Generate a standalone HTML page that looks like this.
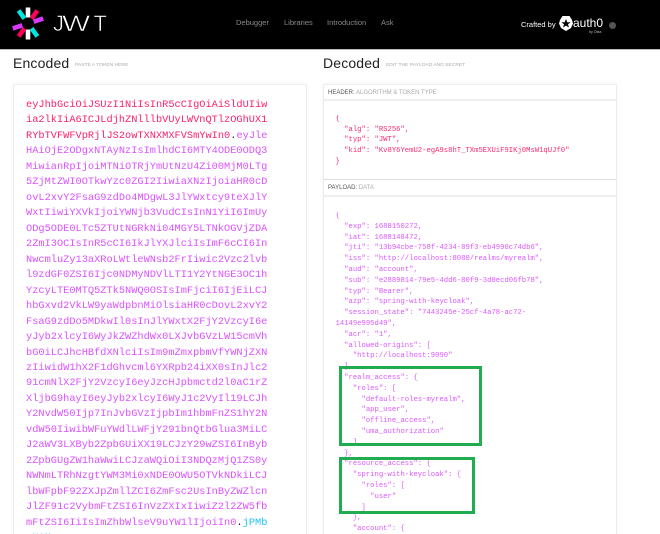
<!DOCTYPE html>
<html style="height:534px;overflow:hidden"><head><meta charset="utf-8"><title>JWT</title>
<style>
html,body{margin:0;padding:0;background:#fff}
body{width:660px;height:534px;overflow:hidden}
#wrap{position:relative;width:660px;height:534px;overflow:hidden;font-family:"Liberation Sans",sans-serif;filter:blur(.35px)}
.a{position:absolute;white-space:pre}
#top{position:absolute;left:0;top:0;width:660px;height:49px;background:#000;border-bottom:1px solid #bbb}
.nav{color:#8a8a8a;font-size:7.5px;top:18px;line-height:10px}
.panel{position:absolute;background:#fff;border:1px solid #ececec;border-radius:2px;box-shadow:0 0 3px rgba(0,0,0,.06);box-sizing:border-box}
.h{font-size:14px;color:#222;letter-spacing:.15px;top:55px;line-height:16px}
.sub{font-size:4.95px;color:#aaa;line-height:6px;top:63px}
.lbl{font-size:6px;line-height:8px;color:#aaa}
.lbl b{font-weight:400;color:#555}
.logo{color:#fff;font-size:22px;line-height:25px;-webkit-text-stroke:.55px #000;transform-origin:0 0}
#tok{position:absolute;left:26px;top:98px;font:10.32px/15.47px "Liberation Mono",monospace;color:#d63aff;white-space:pre;opacity:.88}
.r{color:#fb015b}.k{color:#000}.b{color:#00b9f1}
.json{position:absolute;left:335.5px;font:7.22px/10.79px "Liberation Mono",monospace;white-space:pre;opacity:.85}
.box{position:absolute;border:3px solid #22ac50;box-sizing:border-box}
</style></head><body>
<div id="wrap">
<div id="top"></div>
<svg class="a" style="left:10px;top:6px" width="36" height="36" viewBox="-18 -18 36 36">
<g stroke-width="4.6" fill="none" transform="translate(0,-.5)">
<path stroke="#fff" d="M0-16V-6M0 16V6"/>
<path stroke="#fb015b" d="M0-16V-6M0 16V6" transform="rotate(36)"/>
<path stroke="#d63aff" d="M0-16V-6M0 16V6" transform="rotate(72)"/>
<path stroke="#00e5e0" d="M0-16V-6M0 16V6" transform="rotate(-36)"/>
</g></svg>
<div class="a logo" style="left:53px;top:11px">J</div>
<div class="a logo" style="left:62px;top:11px;transform:scaleX(1.35)">W</div>
<div class="a logo" style="left:93.5px;top:11px">T</div>
<div class="a nav" style="left:236px">Debugger</div>
<div class="a nav" style="left:284px">Libraries</div>
<div class="a nav" style="left:327px">Introduction</div>
<div class="a nav" style="left:381px">Ask</div>
<div class="a" style="left:521px;top:20px;color:#fff;font-size:7.5px;line-height:10px">Crafted by</div>
<svg class="a" style="left:559px;top:16px" width="14" height="15" viewBox="0 0 14 15">
<path fill="#fff" d="M3.5 0H10.5L13 4 14 7.5 12 12 7 15 2 12 0 7.5 1 4Z"/>
<path fill="#000" d="M7 3L8.3 6.2H11.6L9 8.3 10 11.5 7 9.6 4 11.5 5 8.3 2.4 6.2H5.7Z"/>
</svg>
<div class="a" style="left:573px;top:16px;color:#fff;font-size:12px;line-height:15px">auth0</div>
<div class="a" style="left:589px;top:30px;color:#bbb;font-size:3.6px;line-height:5px">by Okta</div>
<div class="a" style="left:608.5px;top:22px;width:7px;height:7px;border-radius:50%;background:#555"></div>

<div class="a h" style="left:13px">Encoded</div>
<div class="a sub" style="left:75px">PASTE A TOKEN HERE</div>
<div class="a h" style="left:323px">Decoded</div>
<div class="a sub" style="left:386px">EDIT THE PAYLOAD AND SECRET</div>

<div class="panel" style="left:13px;top:84px;width:294px;height:470px"></div>
<div class="panel" style="left:323px;top:84px;width:294px;height:470px"></div>
<div class="a" style="left:324px;top:99px;width:292px;height:2px;background:#eee"></div>
<div class="a" style="left:324px;top:179px;width:292px;height:1px;background:#ddd"></div>
<div class="a" style="left:324px;top:195px;width:292px;height:2px;background:#eee"></div>
<div class="a lbl" style="left:328px;top:89px"><b>HEADER:</b> ALGORITHM &amp; TOKEN TYPE</div>
<div class="a lbl" style="left:328px;top:184px"><b>PAYLOAD:</b> DATA</div>

<div id="tok"><span class="r">eyJhbGciOiJSUzI1NiIsInR5cCIgOiAiSldUIiw
ia2lkIiA6ICJLdjhZNlllbVUyLWVnQTlzOGhUX1
RYbTVFWFVpRjlJS2owTXNXMXFVSmYwIn0</span><span class="k">.</span>eyJle
HAiOjE2ODgxNTAyNzIsImlhdCI6MTY4ODE0ODQ3
MiwianRpIjoiMTNiOTRjYmUtNzU4Zi00MjM0LTg
5ZjMtZWI0OTkwYzc0ZGI2IiwiaXNzIjoiaHR0cD
ovL2xvY2FsaG9zdDo4MDgwL3JlYWxtcy9teXJlY
WxtIiwiYXVkIjoiYWNjb3VudCIsInN1YiI6ImUy
ODg5ODE0LTc5ZTUtNGRkNi04MGY5LTNkOGVjZDA
2ZmI3OCIsInR5cCI6IkJlYXJlciIsImF6cCI6In
NwcmluZy13aXRoLWtleWNsb2FrIiwic2Vzc2lvb
l9zdGF0ZSI6Ijc0NDMyNDVlLTI1Y2YtNGE3OC1h
YzcyLTE0MTQ5ZTk5NWQ0OSIsImFjciI6IjEiLCJ
hbGxvd2VkLW9yaWdpbnMiOlsiaHR0cDovL2xvY2
FsaG9zdDo5MDkwIl0sInJlYWxtX2FjY2VzcyI6e
yJyb2xlcyI6WyJkZWZhdWx0LXJvbGVzLW15cmVh
bG0iLCJhcHBfdXNlciIsIm9mZmxpbmVfYWNjZXN
zIiwidW1hX2F1dGhvcml6YXRpb24iXX0sInJlc2
91cmNlX2FjY2VzcyI6eyJzcHJpbmctd2l0aC1rZ
XljbG9hayI6eyJyb2xlcyI6WyJ1c2VyIl19LCJh
Y2NvdW50Ijp7InJvbGVzIjpbIm1hbmFnZS1hY2N
vdW50IiwibWFuYWdlLWFjY291bnQtbGlua3MiLC
J2aWV3LXByb2ZpbGUiXX19LCJzY29wZSI6InByb
2ZpbGUgZW1haWwiLCJzaWQiOiI3NDQzMjQ1ZS0y
NWNmLTRhNzgtYWM3Mi0xNDE0OWU5OTVkNDkiLCJ
lbWFpbF92ZXJpZmllZCI6ZmFsc2UsInByZWZlcn
JlZF91c2VybmFtZSI6InVzZXIxIiwiZ2l2ZW5fb
mFtZSI6IiIsImZhbWlseV9uYW1lIjoiIn0<span class="k">.</span><span class="b">jPMb
wU1Nv</span></div>

<div class="json" style="top:113.8px;color:#fb015b">{
  "alg": "RS256",
  "typ": "JWT",
  "kid": "Kv8Y6YemU2-egA9s8hT_TXm5EXUiF9IKj0MsW1qUJf0"
}</div>
<div class="json" style="top:211px;color:#d63aff">{
  "exp": 1688150272,
  "iat": 1688148472,
  "jti": "13b94cbe-758f-4234-89f3-eb4990c74db6",
  "iss": "http://localhost:8080/realms/myrealm",
  "aud": "account",
  "sub": "e2889814-79e5-4dd6-80f9-3d8ecd06fb78",
  "typ": "Bearer",
  "azp": "spring-with-keycloak",
  "session_state": "7443245e-25cf-4a78-ac72-
14149e995d49",
  "acr": "1",
  "allowed-origins": [
    "http://localhost:9090"
  ],
  "realm_access": {
    "roles": [
      "default-roles-myrealm",
      "app_user",
      "offline_access",
      "uma_authorization"
    ]
  },
  "resource_access": {
    "spring-with-keycloak": {
      "roles": [
        "user"
      ]
    },
    "account": {</div>
<div class="box" style="left:339px;top:366px;width:143px;height:80px"></div>
<div class="box" style="left:339px;top:457px;width:136px;height:57px"></div>
</div>
</body></html>
